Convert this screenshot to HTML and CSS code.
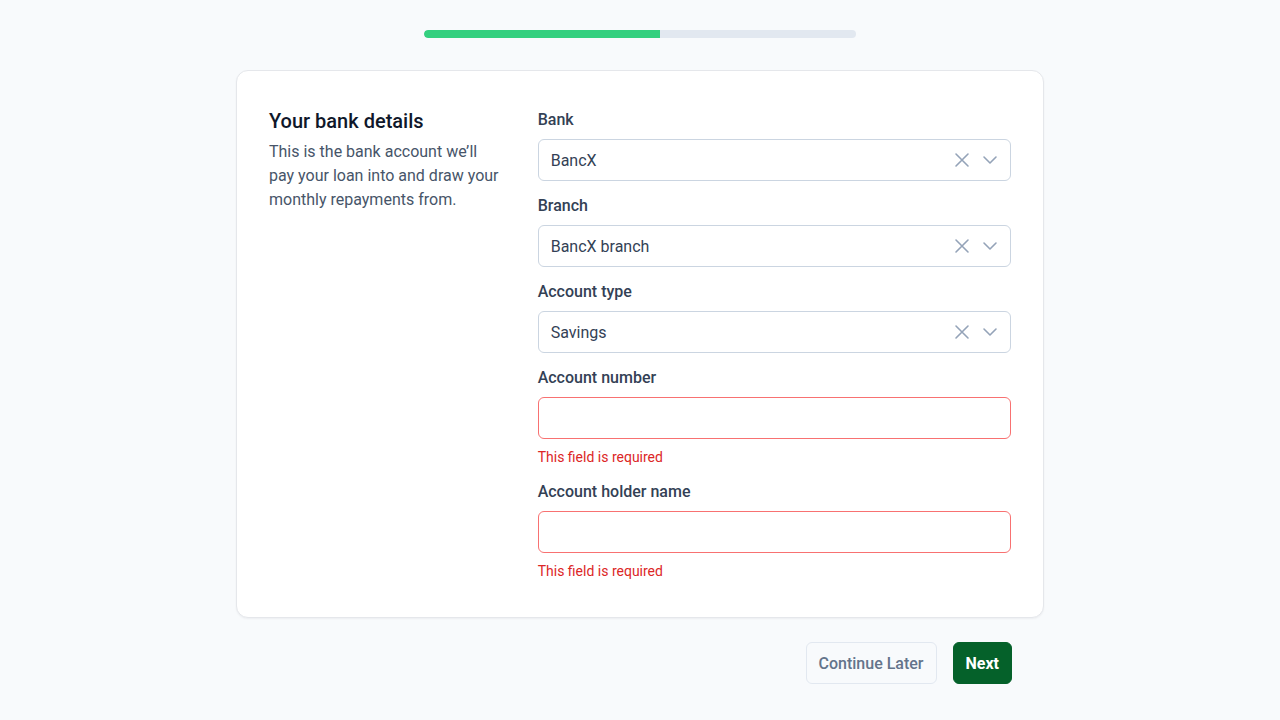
FILE: index.html
```html
<!DOCTYPE html>
<html lang="en">
<head>
<meta charset="utf-8">
<title>Bank details</title>
<link rel="stylesheet" href="styles.css">
</head>
<body>
<main class="page">
  <div class="progress"><div class="progress-fill" style="width:54.6%"></div></div>
  <section class="card">
    <div class="intro">
      <h1 class="title">Your bank details</h1>
      <p class="desc">This is the bank account we’ll pay your loan into and draw your monthly repayments from.</p>
    </div>
    <div class="fields">
      <div class="field">
        <label class="label">Bank</label>
        <div class="input select"><span class="value">BancX</span>
          <span class="icons">
            <svg class="ico" width="16" height="16" viewBox="0 0 16 16"><path d="M2 2L14 14M14 2L2 14" stroke="#94a3b8" stroke-width="1.6" fill="none" stroke-linecap="round"/></svg>
            <svg class="ico" width="16" height="16" viewBox="0 0 16 16"><path d="M2 5L8 11L14 5" stroke="#94a3b8" stroke-width="1.6" fill="none" stroke-linecap="round" stroke-linejoin="round"/></svg>
          </span>
        </div>
      </div>
      <div class="field">
        <label class="label">Branch</label>
        <div class="input select"><span class="value">BancX branch</span>
          <span class="icons">
            <svg class="ico" width="16" height="16" viewBox="0 0 16 16"><path d="M2 2L14 14M14 2L2 14" stroke="#94a3b8" stroke-width="1.6" fill="none" stroke-linecap="round"/></svg>
            <svg class="ico" width="16" height="16" viewBox="0 0 16 16"><path d="M2 5L8 11L14 5" stroke="#94a3b8" stroke-width="1.6" fill="none" stroke-linecap="round" stroke-linejoin="round"/></svg>
          </span>
        </div>
      </div>
      <div class="field">
        <label class="label">Account type</label>
        <div class="input select"><span class="value">Savings</span>
          <span class="icons">
            <svg class="ico" width="16" height="16" viewBox="0 0 16 16"><path d="M2 2L14 14M14 2L2 14" stroke="#94a3b8" stroke-width="1.6" fill="none" stroke-linecap="round"/></svg>
            <svg class="ico" width="16" height="16" viewBox="0 0 16 16"><path d="M2 5L8 11L14 5" stroke="#94a3b8" stroke-width="1.6" fill="none" stroke-linecap="round" stroke-linejoin="round"/></svg>
          </span>
        </div>
      </div>
      <div class="field">
        <label class="label">Account number</label>
        <div class="input error"></div>
        <p class="err-text">This field is required</p>
      </div>
      <div class="field">
        <label class="label">Account holder name</label>
        <div class="input error"></div>
        <p class="err-text">This field is required</p>
      </div>
    </div>
  </section>
  <div class="actions">
    <button class="btn btn-secondary">Continue Later</button>
    <button class="btn btn-primary">Next</button>
  </div>
</main>
</body>
</html>
```
FILE: styles.css
```css
* { box-sizing: border-box; }
html, body { margin: 0; padding: 0; }
body {
  background: #f8fafc;
  font-family: Roboto, "Liberation Sans", Arial, sans-serif;
  color: #334155;
}
.page {
  width: 808px;
  margin: 0 auto;
  padding-top: 30px;
  display: flex;
  flex-direction: column;
  align-items: center;
}
.progress {
  width: 432px;
  height: 8px;
  border-radius: 4px;
  background: #e2e8f0;
  overflow: hidden;
}
.progress-fill {
  height: 100%;
  background: #34d07f;
  border-radius: 4px 0 0 4px;
}
.card {
  margin-top: 32px;
  width: 808px;
  background: #fff;
  border: 1px solid #e5e7eb;
  border-radius: 12px;
  box-shadow: 0 1px 2px rgba(15, 23, 42, 0.05);
  padding: 36px 32px;
  display: grid;
  grid-template-columns: 1fr 2fr;
  column-gap: 32px;
}
.title {
  margin: 0;
  font-size: 20px;
  line-height: 28px;
  font-weight: 500;
  color: #0f172a;
}
.desc {
  margin: 5px 0 0;
  font-size: 16px;
  line-height: 24px;
  color: #475569;
}
.fields {
  padding-top: 1px;
  display: flex;
  flex-direction: column;
  gap: 13px;
}
.field { display: flex; flex-direction: column; }
.label {
  font-size: 16px;
  line-height: 24px;
  font-weight: 500;
  color: #334155;
  margin-bottom: 7px;
}
.input {
  height: 42px;
  border: 1px solid #cbd5e1;
  border-radius: 6px;
  background: #fff;
  padding: 0 12px;
  display: flex;
  align-items: center;
  font-size: 16px;
  color: #334155;
}
.input.error { border-color: #f87171; }
.value { flex: 1; }
.icons {
  display: flex;
  align-items: center;
  gap: 12px;
}
.ico { display: block; }
.err-text {
  margin: 8px 0 0;
  font-size: 14px;
  line-height: 20px;
  color: #dc2626;
}
.actions {
  width: 808px;
  padding: 0 32px;
  margin-top: 24px;
  display: flex;
  justify-content: flex-end;
  gap: 16px;
}
.btn {
  height: 42px;
  padding: 0 12px;
  border-radius: 6px;
  font-family: Roboto, "Liberation Sans", Arial, sans-serif;
  font-size: 16px;
  border: 1px solid transparent;
  cursor: pointer;
}
.btn-secondary {
  background: #f8fafc;
  border-color: #e2e8f0;
  color: #64748b;
  font-weight: 500;
}
.btn-primary {
  background: #05612a;
  border-color: #05612a;
  color: #fff;
  font-weight: 700;
}
```
